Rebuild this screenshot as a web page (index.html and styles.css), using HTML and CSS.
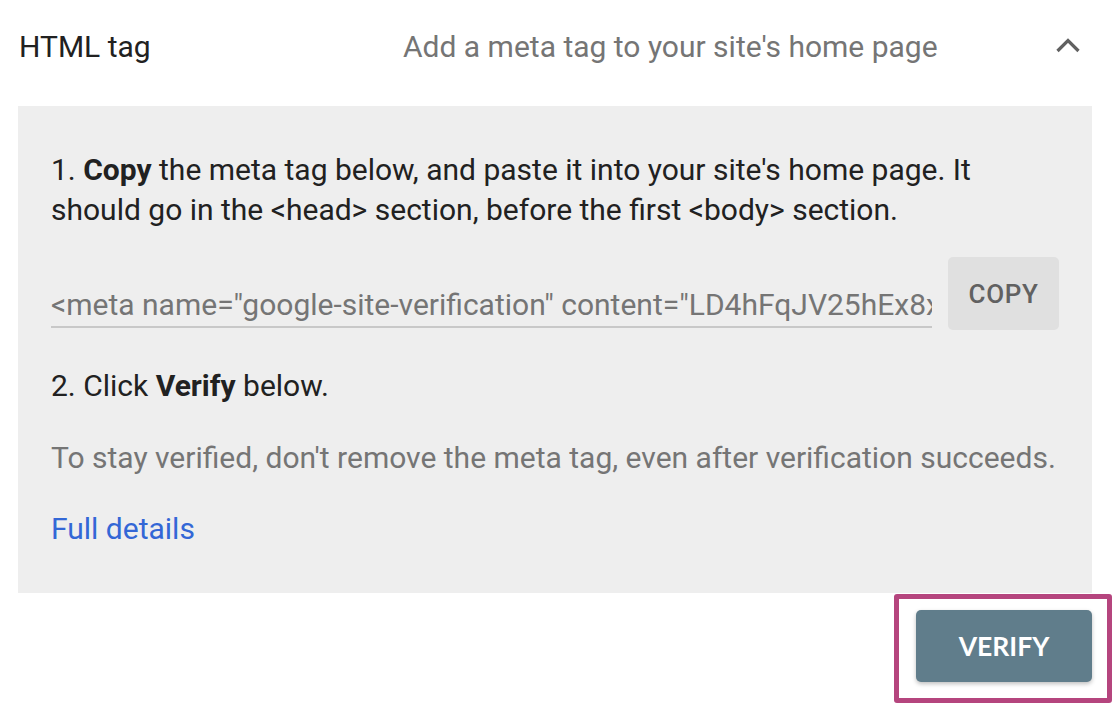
FILE: index.html
```html
<!DOCTYPE html>
<html>
<head>
<meta charset="utf-8">
<link rel="stylesheet" href="styles.css">
</head>
<body>
<div class="card">
  <div class="header">
    <span class="title">HTML tag</span>
    <span class="subtitle">Add a meta tag to your site's home page</span>
    <svg class="chevron" width="24" height="16" viewBox="0 0 24 16"><path d="M1.5 14 L12 3.5 L22.5 14" fill="none" stroke="#616161" stroke-width="3.2"/></svg>
  </div>
  <div class="panel">
    <p class="step">1. <b>Copy</b> the meta tag below, and paste it into your site's home page. It should go in the &lt;head&gt; section, before the first &lt;body&gt; section.</p>
    <div class="copy-row">
      <div class="field">&lt;meta name="google-site-verification" content="LD4hFqJV25hEx8xQ0mZr" /&gt;</div>
      <button class="copy">COPY</button>
    </div>
    <p class="step step2">2. Click <b>Verify</b> below.</p>
    <p class="note">To stay verified, don't remove the meta tag, even after verification succeeds.</p>
    <a class="link" href="#">Full details</a>
  </div>
  <div class="actions">
    <div class="highlight">
      <button class="verify">VERIFY</button>
    </div>
  </div>
</div>
</body>
</html>
```

FILE: styles.css
```css
html, body {
  margin: 0;
  padding: 0;
  background: #ffffff;
}
body {
  font-family: Roboto, "Liberation Sans", sans-serif;
  width: 1120px;
  height: 710px;
  overflow: hidden;
}
.card {
  display: flex;
  flex-direction: column;
}
.header {
  display: flex;
  align-items: flex-start;
  height: 106px;
  box-sizing: border-box;
  padding: 29px 0 0 19px;
}
.title {
  width: 384px;
  font-size: 30px;
  line-height: 36px;
  color: #212121;
}
.subtitle {
  flex: 1;
  font-size: 30px;
  line-height: 36px;
  color: #757575;
}
.chevron {
  margin: 8px 40px 0 0;
}
.panel {
  margin-left: 18px;
  width: 1074px;
  height: 487px;
  box-sizing: border-box;
  background: #eeeeee;
  padding: 44px 32px 0 33px;
  display: flex;
  flex-direction: column;
}
.step {
  margin: 0;
  font-size: 30px;
  line-height: 40px;
  color: #212121;
}
.step b {
  font-weight: 700;
}
.copy-row {
  display: flex;
  align-items: flex-start;
  margin-top: 27px;
  gap: 16px;
}
.field {
  width: 881px;
  flex: none;
  margin-top: 30px;
  padding-bottom: 3px;
  font-size: 30px;
  line-height: 36px;
  color: #757575;
  white-space: nowrap;
  overflow: hidden;
  border-bottom: 2px solid #c8c8c8;
}
.copy {
  flex: none;
  width: 111px;
  height: 73px;
  border: none;
  border-radius: 5px;
  background: #e0e0e0;
  color: #616161;
  font-family: Roboto, "Liberation Sans", sans-serif;
  font-weight: 500;
  font-size: 26px;
  letter-spacing: 0.6px;
  padding: 0;
}
.step2 {
  margin-top: 36px;
}
.note {
  margin: 32px 0 0 0;
  font-size: 30px;
  line-height: 40px;
  color: #757575;
}
.link {
  margin-top: 31px;
  font-size: 30px;
  line-height: 40px;
  color: #3367d6;
  text-decoration: none;
  align-self: flex-start;
}
.actions {
  display: flex;
  justify-content: flex-end;
  padding-right: 8px;
  margin-top: 1px;
}
.highlight {
  border: 5px solid #b5457e;
  border-radius: 3px;
  padding: 11px 15px 16px 17px;
}
.verify {
  display: block;
  width: 176px;
  height: 72px;
  border: none;
  border-radius: 5px;
  background: #607d8b;
  color: #ffffff;
  font-family: Lato, "Liberation Sans", sans-serif;
  font-weight: 700;
  font-size: 26.5px;
  padding: 0;
  box-shadow: 0 2px 4px rgba(0,0,0,0.25);
}
```
